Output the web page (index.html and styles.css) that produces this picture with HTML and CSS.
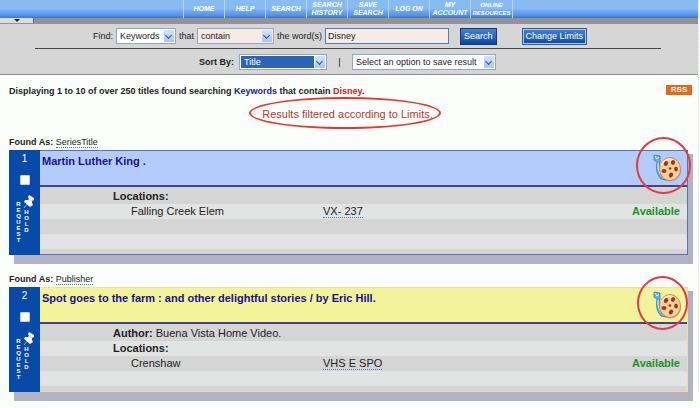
FILE: index.html
```html
<!DOCTYPE html>
<html lang="en">
<head>
<meta charset="utf-8">
<title>Search Results</title>
<link rel="stylesheet" href="styles.css">
</head>
<body>
<svg class="sprites" aria-hidden="true">
  <symbol id="pin" viewBox="0 0 12 14">
    <path d="M1 13L5 8" stroke="#8fb2e0" stroke-width="1"/>
    <path d="M6 0L11 3L11 5L9 6L9 8L10 10L7 12L1 7L2 5L5 5L6 4L5 2Z" fill="#fff"/>
    <path d="M6 4L9 6" stroke="#b8cbe6" stroke-width=".8"/>
  </symbol>
  <symbol id="reel" viewBox="0 0 30 28">
    <ellipse cx="18" cy="17" rx="11" ry="10.5" fill="#8c8a9c" opacity=".55"/>
    <path d="M2 1L8 2L8 8C6 14 8 20 14 26L9 25C4 19 4 14 5 8L2 6Z" fill="#62b5df" stroke="#2e78ad" stroke-width=".8"/>
    <path d="M3 2L5 5L7 3M6 9L6 14L8 20" fill="none" stroke="#d9f2fb" stroke-width="1"/>
    <ellipse cx="18" cy="15" rx="10.5" ry="11.500" fill="#f8cf98" stroke="#b97a48" stroke-width=".8"/>
    <path d="M9 11C11 6 16 4 21 6" fill="none" stroke="#fff0cf" stroke-width="1.5"/>
    <g fill="#963b22">
      <ellipse cx="14" cy="9.500" rx="2" ry="2.600" transform="rotate(35 14 9.500)"/>
      <ellipse cx="21" cy="8.500" rx="2" ry="2.500" transform="rotate(20 21 8.500)"/>
      <ellipse cx="24" cy="15" rx="1.900" ry="2.500"/>
      <ellipse cx="12" cy="17" rx="2.500" ry="2"/>
      <ellipse cx="19" cy="21" rx="2" ry="2.600" transform="rotate(35 19 21)"/>
      <circle cx="18" cy="14.500" r="1.300"/>
    </g>
  </symbol>
</svg>
<div class="page">
  <nav class="nav">
    <a href="#">HOME</a>
    <a href="#">HELP</a>
    <a href="#">SEARCH</a>
    <a href="#">SEARCH<br>HISTORY</a>
    <a href="#">SAVE<br>SEARCH</a>
    <a href="#">LOG ON</a>
    <a href="#">MY<br>ACCOUNT</a>
    <a href="#" class="small">ONLINE<br>RESOURCES</a>
  </nav>
  <div class="strip"><button class="tab" aria-label="Toggle menu"></button></div>

  <form class="search">
    <div class="find-row">
      <label for="field">Find:</label>
      <span class="pick field"><select id="field"><option>Keywords</option></select></span>
      <label for="match">that</label>
      <span class="pick match tint"><select id="match"><option>contain</option></select></span>
      <label for="words">the word(s)</label>
      <input class="words" id="words" type="text" value="Disney">
      <button class="btn" type="button">Search</button>
      <button class="btn limits" type="button">Change Limits</button>
    </div>
    <div class="sort-row">
      <label class="sort-label" for="sort">Sort By:</label>
      <span class="pick sort"><select id="sort"><option>Title</option></select></span>
      <span class="bar">|</span>
      <span class="pick save"><select aria-label="Save results"><option>Select an option to save result</option></select></span>
    </div>
  </form>

  <main class="results">
    <div class="summary">
      <p>Displaying 1 to 10 of over 250 titles found searching <span class="key">Keywords</span> that contain <span class="term">Disney</span>.</p>
      <a class="rss" href="#">RSS</a>
    </div>
    <div class="notice">Results filtered according to Limits.</div>

    <section class="result">
      <p class="found">Found As: <a href="#">SeriesTitle</a></p>
      <article class="card blue">
        <div class="side">
          <span class="num">1</span>
          <input type="checkbox" aria-label="Select title 1">
          <a class="hold" href="#"><span class="word">REQUEST</span><span class="hold-right"><svg class="pin"><use href="#pin"/></svg><span class="word">HOLD</span></span></a>
        </div>
        <div class="main">
          <header class="head">
            <a class="title" href="#">Martin Luther King .</a>
            <span class="media"><svg class="reel"><use href="#reel"/></svg></span>
          </header>
          <div class="body">
            <p class="line"><b>Locations:</b></p>
            <p class="copy"><span>Falling Creek Elem</span><span><a href="#">VX- 237</a></span><strong>Available</strong></p>
          </div>
        </div>
      </article>
    </section>

    <section class="result">
      <p class="found">Found As: <a href="#">Publisher</a></p>
      <article class="card yellow">
        <div class="side">
          <span class="num">2</span>
          <input type="checkbox" aria-label="Select title 2">
          <a class="hold" href="#"><span class="word">REQUEST</span><span class="hold-right"><svg class="pin"><use href="#pin"/></svg><span class="word">HOLD</span></span></a>
        </div>
        <div class="main">
          <header class="head">
            <a class="title" href="#">Spot goes to the farm : and other delightful stories / by Eric Hill.</a>
            <span class="media"><svg class="reel"><use href="#reel"/></svg></span>
          </header>
          <div class="body">
            <p class="line"><b>Author:</b> Buena Vista Home Video.</p>
            <p class="line"><b>Locations:</b></p>
            <p class="copy"><span>Crenshaw</span><span><a href="#">VHS E SPO</a></span><strong>Available</strong></p>
          </div>
        </div>
      </article>
    </section>
  </main>
</div>
</body>
</html>
```
FILE: styles.css
```css
*, *::before, *::after { box-sizing: border-box; }

body {
  margin: 0;
  background: #fcfefb;
  color: #222;
  font: 9px/12px "Liberation Sans", Arial, sans-serif;
}

p { margin: 0; }
a { color: inherit; text-decoration: none; }
button, input, select { font: inherit; color: inherit; margin: 0; }
.sprites { display: none; }

.page {
  margin-right: 1px;
  border-right: 1px dotted #dcdcdc;
}

/* Top navigation */
.nav {
  display: flex;
  height: 18px;
  padding-left: 183px;
  background: linear-gradient(#89bbf3 0 9px, #76adf0 10px, #649fee 13px, #4c8fe8 16px, #3c71b8 18px);
}
.nav a {
  display: flex;
  align-items: center;
  justify-content: center;
  width: 41px;
  border-left: 1px solid #b4d5fa;
  color: #fff;
  font: italic bold 7px/8px "Liberation Sans", Arial, sans-serif;
  text-align: center;
}
.nav a:last-child { border-right: 1px solid #b4d5fa; }
.nav .small {
  width: 43px;
  font-size: 6px;
}

.strip {
  display: flex;
  height: 6px;
  background: #929298;
}
.tab {
  display: flex;
  justify-content: center;
  width: 34px;
  height: 5px;
  padding: 1px 0 0;
  border: 0;
  border-right: 1px solid #666;
  background: #dedede;
}
.tab::before {
  content: "";
  border: 3px solid transparent;
  border-top-color: #222;
  border-bottom: 0;
}

/* Search form */
.search {
  border-bottom: 1px solid #8c8c8c;
  background: #d6d6d6;
}
.find-row, .sort-row {
  display: flex;
  align-items: center;
  height: 25px;
}
.find-row {
  gap: 3px;
  margin: 0 37px 0 35px;
  padding-left: 58px;
  border-bottom: 1px solid #444;
}
.sort-row { padding-left: 199px; }
.sort-label { width: 40px; font-weight: bold; }
.bar { width: 25px; text-align: center; }

.pick {
  position: relative;
  display: flex;
  height: 16px;
  border: 1px solid #8ea8d0;
  background: #fff;
}
.pick select {
  appearance: none;
  width: 100%;
  padding: 0 12px 0 3px;
  border: 0;
  background: transparent;
}
.pick::before {
  content: "";
  position: absolute;
  inset: 1px 1px 1px auto;
  width: 10px;
  background: linear-gradient(#d3e1fc, #a9c6f7);
  pointer-events: none;
}
.pick::after {
  content: "";
  position: absolute;
  top: 4px;
  right: 4px;
  width: 5px;
  height: 5px;
  border: solid #3d547e;
  border-width: 0 1px 1px 0;
  transform: rotate(45deg);
  pointer-events: none;
}
.pick.tint { background: #f8eae5; }
.field { width: 60px; }
.match { width: 77px; }
.sort { width: 88px; }
.save { width: 144px; }
.sort select {
  margin: 1px 12px 1px 1px;
  background: #2c62b8;
  color: #fff;
}

.words {
  width: 124px;
  height: 16px;
  padding: 0 2px;
  border: 1px solid #4f7dae;
  background: #f8eae5;
}
.btn {
  height: 17px;
  margin-left: 8px;
  padding: 0 3px;
  border: 1px solid #12387a;
  background: linear-gradient(#4583cb, #2461b9 60%, #0c4696);
  color: #fff;
}
.limits {
  margin-left: 22px;
  border-color: #315c9c;
  box-shadow: inset 0 0 0 1px #a9c7ec;
}

/* Results */
.results { padding: 10px 10px 0 9px; }
.summary {
  display: flex;
  justify-content: space-between;
  margin-right: -4px;
  font-weight: bold;
}
.rss {
  width: 26px;
  height: 10px;
  border: 1px solid #d4692d;
  background: #ee6512;
  color: #fff;
  font: bold 8px/8px "Liberation Sans", Arial, sans-serif;
  text-align: center;
}
.key { color: #1a1a9c; }
.term { color: #c8201c; }
.notice {
  width: 192px;
  height: 32px;
  margin: 0 auto 7px 240px;
  padding-left: 5px;
  border: 2px solid #e9352c;
  border-radius: 50%;
  color: #bd3631;
  font-size: 11px;
  line-height: 30px;
  text-align: center;
  white-space: nowrap;
}

.result { margin-bottom: 18px; }
.found {
  height: 14px;
  font-weight: bold;
}
.found a {
  border-bottom: 1px dotted #3b8b6b;
  font-weight: normal;
}
.card {
  display: flex;
  height: 105px;
  box-shadow: 5px 9px #b3b1c5, 5px 4px #b3b1c5;
}
.side {
  display: flex;
  flex-direction: column;
  align-items: center;
  width: 31px;
  padding-top: 3px;
  background: #074aa8;
  color: #fff;
}
.num { font-size: 10px; }
.side input {
  appearance: none;
  width: 10px;
  height: 10px;
  margin-top: 10px;
  border: 1px solid #c4d2e8;
  border-radius: 1px;
  background: #fff;
}
.hold {
  display: flex;
  margin-top: 10px;
}
.hold .word {
  font: bold 6px/8px "Liberation Sans", Arial, sans-serif;
  writing-mode: vertical-rl;
  text-orientation: upright;
}
.hold > .word { margin-top: 6px; }
.hold-right {
  display: flex;
  flex-direction: column;
  align-items: flex-start;
}
.pin {
  width: 12px;
  height: 14px;
}

.main {
  flex: 1;
  border: 1px solid #5574b4;
  border-left: 0;
}
.head {
  display: flex;
  justify-content: space-between;
  height: 36px;
  padding: 3px 5px 0 2px;
  border-bottom: 2px solid #45418a;
  background: #b4ccfb;
}
.title {
  color: #171190;
  font-weight: bold;
  font-size: 11px;
  line-height: 14px;
}
.media { position: relative; }
.media::after {
  content: "";
  position: absolute;
  top: -17px;
  right: -9px;
  width: 55px;
  height: 57px;
  border: 2px solid #e23a42;
  border-radius: 50%;
}
.reel {
  display: block;
  width: 30px;
  height: 28px;
}
.body {
  height: 67px;
  padding-top: 2px;
  background: repeating-linear-gradient(#d5d5d5 0 15px, #e2e4e3 15px 30px) 0 2px #d5d5d5;
  font-size: 11px;
  line-height: 15px;
}
.line { padding-left: 73px; }
.copy {
  display: grid;
  grid-template-columns: 192px 1fr auto;
  padding: 0 7px 0 91px;
}
.copy a { border-bottom: 1px dotted #5478a8; }
.copy strong { color: #189620; }
.yellow .main { border-color: #e8e29a; }
.yellow .head { background: #f3f39b; }
.yellow .media::after {
  top: -15px;
  right: -6px;
  width: 51px;
  height: 54px;
}
```
